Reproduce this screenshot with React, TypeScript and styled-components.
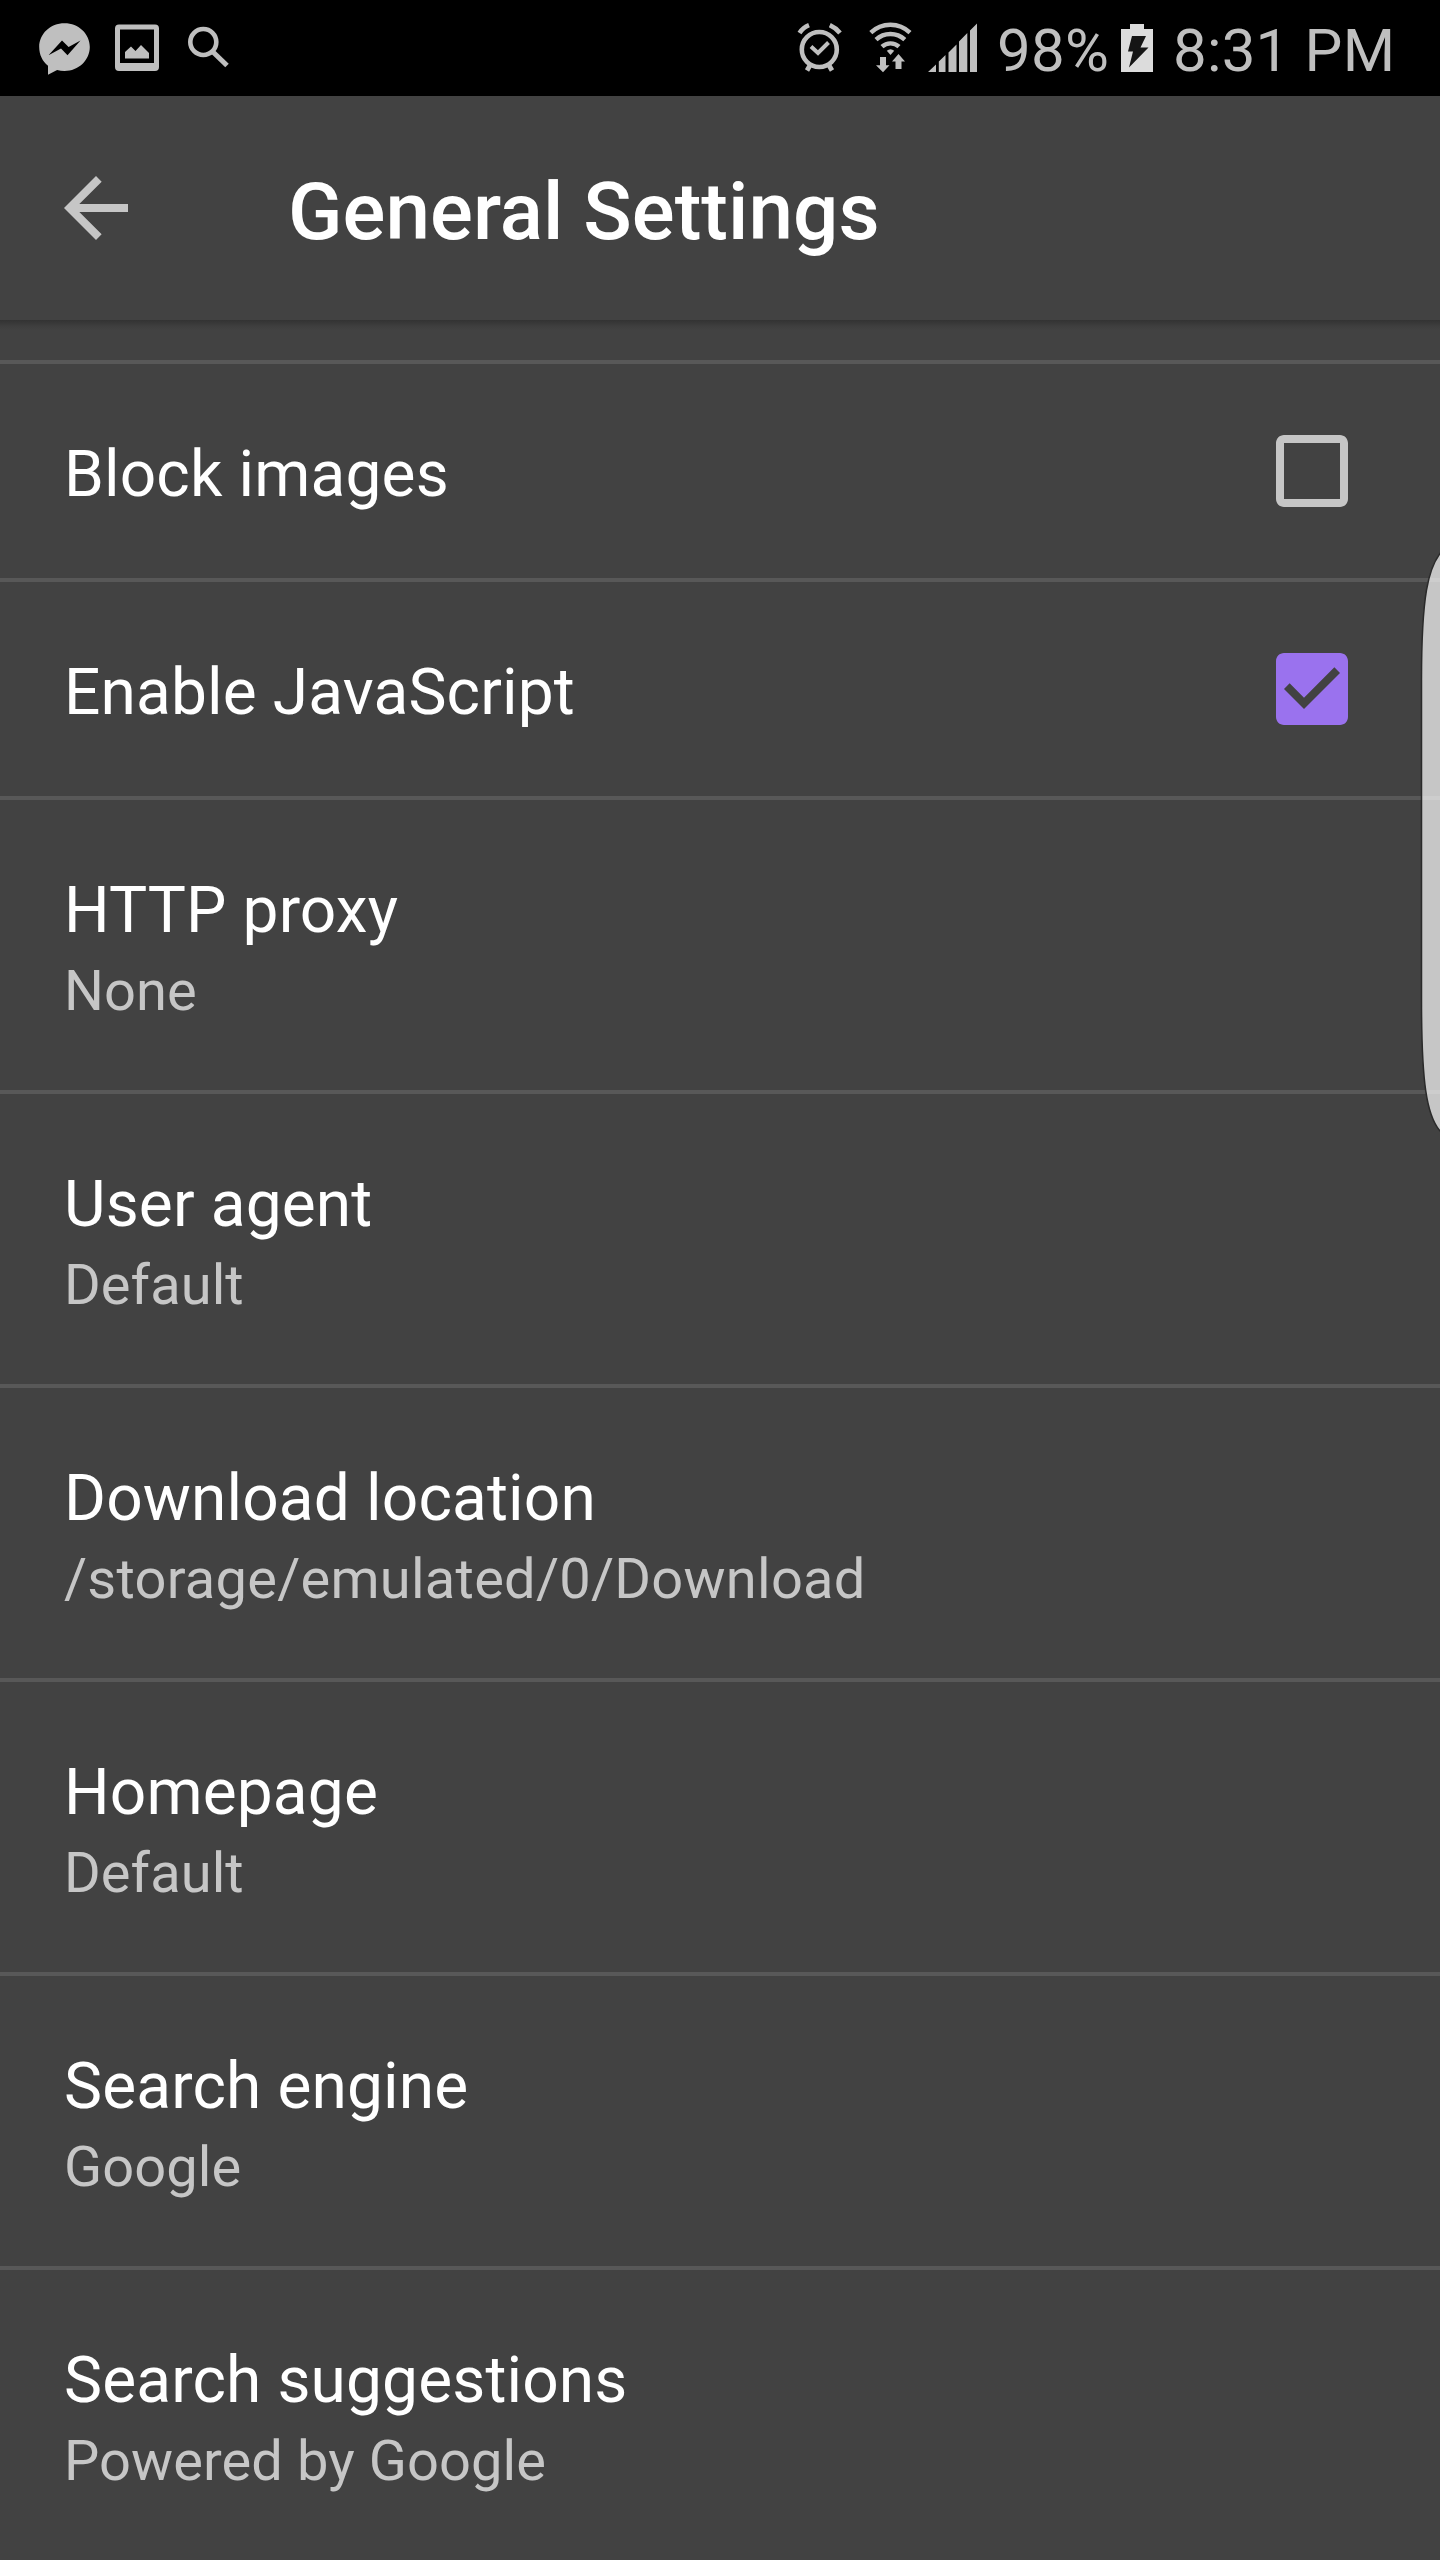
import React from "react";
import styled, { createGlobalStyle } from "styled-components";

const GlobalStyle = createGlobalStyle`
  * { box-sizing: border-box; }
  body {
    margin: 0;
    background: #424242;
    font-family: Roboto, "Noto Sans", sans-serif;
  }
`;

const Screen = styled.div`
  position: relative;
  display: flex;
  flex-direction: column;
  width: 1440px;
  height: 2560px;
  overflow: hidden;
  background: #424242;
`;

const StatusBar = styled.header`
  display: flex;
  justify-content: space-between;
  flex: none;
  height: 96px;
  background: #000;
  color: #bfbfbf;
`;

const StatusIcons = styled.svg`
  display: block;
  flex: none;
`;

const StatusGroup = styled.div`
  display: flex;
`;

const StatusText = styled.span<{ $width: number; $spacing?: number }>`
  width: ${(p) => p.$width}px;
  padding-top: 15px;
  font-size: 60px;
  line-height: 71px;
  letter-spacing: ${(p) => p.$spacing ?? 0}px;
  white-space: nowrap;
`;

const Toolbar = styled.div`
  display: flex;
  align-items: flex-start;
  flex: none;
  height: 224px;
  padding-left: 48px;
`;

const BackButton = styled.button`
  display: flex;
  margin: 64px 144px 0 0;
  padding: 0;
  border: 0;
  background: none;
  color: #c6c6c6;
`;

const Title = styled.h1`
  margin: 69px 0 0;
  color: #fff;
  font-size: 80px;
  font-weight: 500;
  line-height: 94px;
  letter-spacing: 0.04px;
  white-space: nowrap;
`;

const List = styled.main`
  flex: 1;
  min-height: 0;
  overflow: hidden;
`;

const ToolbarShadow = styled.div`
  height: 40px;
  background: linear-gradient(#333, #383838 3px, #3e3e3e 6px, #424242 10px) no-repeat;
`;

const Row = styled.div<{ $tall?: boolean }>`
  display: flex;
  justify-content: space-between;
  height: ${(p) => (p.$tall ? 294 : 218)}px;
  padding: 73px 80px 0 64px;
  border-top: 4px solid #585858;
`;

const RowTitle = styled.div`
  color: #fff;
  font-size: 64px;
  line-height: 75px;
  letter-spacing: 0.14px;
  white-space: nowrap;
`;

const RowSummary = styled.div<{ $spacing?: number }>`
  margin-top: 10px;
  color: #c6c6c6;
  font-size: 56px;
  line-height: 66px;
  letter-spacing: ${(p) => p.$spacing ?? 0.08}px;
  white-space: nowrap;
`;

const CheckIcon = styled.svg<{ $checked: boolean }>`
  margin-top: -14px;
  color: ${(p) => (p.$checked ? "#9a72ee" : "#c6c6c6")};
`;

const EdgeHandle = styled.svg`
  position: absolute;
  right: 0;
  top: 540px;
`;

type Setting = { title: string; summary?: string; spacing?: number; checked?: boolean };

const settings: Setting[] = [
  { title: "Block images", checked: false },
  { title: "Enable JavaScript", checked: true },
  { title: "HTTP proxy", summary: "None" },
  { title: "User agent", summary: "Default" },
  { title: "Download location", summary: "/storage/emulated/0/Download", spacing: 0.25 },
  { title: "Homepage", summary: "Default" },
  { title: "Search engine", summary: "Google" },
  { title: "Search suggestions", summary: "Powered by Google" },
];

const UNCHECKED =
  "M19 5v14H5V5h14m0-2H5c-1.1 0-2 .9-2 2v14c0 1.1.9 2 2 2h14c1.1 0 2-.9 2-2V5c0-1.1-.9-2-2-2z";
const CHECKED =
  "M19 3H5c-1.11 0-2 .9-2 2v14c0 1.1.89 2 2 2h14c1.11 0 2-.9 2-2V5c0-1.1-.89-2-2-2zm-9 14l-5-5 1.41-1.41L10 14.17l7.59-7.59L19 8l-9 9z";

function Checkbox({ checked }: { checked: boolean }) {
  return (
    <CheckIcon $checked={checked} width="96" height="96" viewBox="0 0 24 24" fill="currentColor">
      <path d={checked ? CHECKED : UNCHECKED} />
    </CheckIcon>
  );
}

function NotificationIcons() {
  return (
    <StatusIcons width="240" height="96" viewBox="0 0 240 96" fill="#bfbfbf">
      <path d="M64.500 23.300c14.200 0 25.300 10.600 25.300 23.700S78.700 71 64.500 71c-2.600 0-5-.2-7.400-.9L48 74.700V65.800C42.500 61.300 39.200 54.700 39.200 47c0-13.100 11.100-23.700 25.300-23.700z" />
      <path d="M48.500 55.300 62 40.500l6.600 6.600L80.500 40.500 67.500 55.300 61 48.500z" fill="#000" />
      <path fillRule="evenodd" d="M119 24.500h36a4 4 0 0 1 4 4V67a4 4 0 0 1-4 4h-36a4 4 0 0 1-4-4V28.500a4 4 0 0 1 4-4zM120 29.500V63h34V29.500z" />
      <path d="M125 58.500V52l6-5.500 4.500 4.500L141 45l8 8v5.500z" />
      <circle cx="203.300" cy="42" r="13" fill="none" stroke="#bfbfbf" strokeWidth="4.600" />
      <path d="M213 52 227 65.500" stroke="#bfbfbf" strokeWidth="5" />
    </StatusIcons>
  );
}

function ConnectivityIcons() {
  return (
    <StatusIcons width="202" height="96" viewBox="795 0 202 96" fill="none" stroke="#bfbfbf">
      <circle cx="819.300" cy="49.500" r="17.500" strokeWidth="4.600" />
      <path d="M811 46.500 818 53 828.500 42.500" strokeWidth="4" />
      <path d="M799.500 33Q803 27.500 809 25.200M829.800 25.200Q836 28 840 33" strokeWidth="4.600" />
      <path d="M810.500 64.500 807 70.500M828.500 64.500 832 70.500" strokeWidth="4.800" />
      <g strokeWidth="4.400">
        <path d="M870.800 32.700a28.200 28.200 0 0 1 39.200 0" />
        <path d="M876 39.700a21 21 0 0 1 28.800 0" />
        <path d="M882 46.700a12.500 12.500 0 0 1 17 0" />
      </g>
      <g fill="#bfbfbf" stroke="none">
        <path d="M886.800 50.800Q890.500 47.800 894.200 50.800L890.500 55z" />
        <path d="M880 57h6v8.200h3.500L883 72.200 876 65.200h4z" />
        <path d="M895.500 69V61.500H892l6.500-7.500L905 61.500h-3.500V69z" />
        <path d="M928 72 936 64.500V72zM938.800 72V61.500L945.500 55V72zM948.500 72V52.500L956.500 44.500V72zM959 72V41.500L967.300 33V72zM970 72V30.500L977 23.500V72z" />
      </g>
    </StatusIcons>
  );
}

function BatteryIcon() {
  return (
    <StatusIcons width="61" height="96" viewBox="1112 0 61 96">
      <path d="M1121 29h9v-5h14v5h9v43h-32z" fill="#dcdcdc" />
      <path d="M1132 36h14l-5.500 11.500h8L1129 67.500l4-16h-5z" fill="#151515" />
    </StatusIcons>
  );
}

export default function App() {
  return (
    <>
      <GlobalStyle />
      <Screen>
        <StatusBar>
          <NotificationIcons />
          <StatusGroup>
            <ConnectivityIcons />
            <StatusText $width={115} $spacing={0.3}>98%</StatusText>
            <BatteryIcon />
            <StatusText $width={267} $spacing={0.2}>8:31 PM</StatusText>
          </StatusGroup>
        </StatusBar>
        <Toolbar>
          <BackButton aria-label="Back">
            <svg width="96" height="96" viewBox="0 0 24 24" fill="currentColor">
              <path d="M20 11H7.830l5.590-5.590L12 4l-8 8 8 8 1.410-1.410L7.830 13H20v-2z" />
            </svg>
          </BackButton>
          <Title>General Settings</Title>
        </Toolbar>
        <List>
          <ToolbarShadow />
          {settings.map((s) => (
            <Row key={s.title} $tall={s.summary !== undefined}>
              <div>
                <RowTitle>{s.title}</RowTitle>
                {s.summary && <RowSummary $spacing={s.spacing}>{s.summary}</RowSummary>}
              </div>
              {s.checked !== undefined && <Checkbox checked={s.checked} />}
            </Row>
          ))}
        </List>
        <EdgeHandle width="20" height="604" viewBox="1420 540 20 604">
          <path
            d="M1442 551C1428 567 1421.500 596 1421.500 680V1000C1421.500 1080 1426 1118 1442 1133"
            fill="#fff"
            fillOpacity="0.7"
            stroke="#2a2a2a"
            strokeWidth="1.500"
          />
        </EdgeHandle>
      </Screen>
    </>
  );
}
